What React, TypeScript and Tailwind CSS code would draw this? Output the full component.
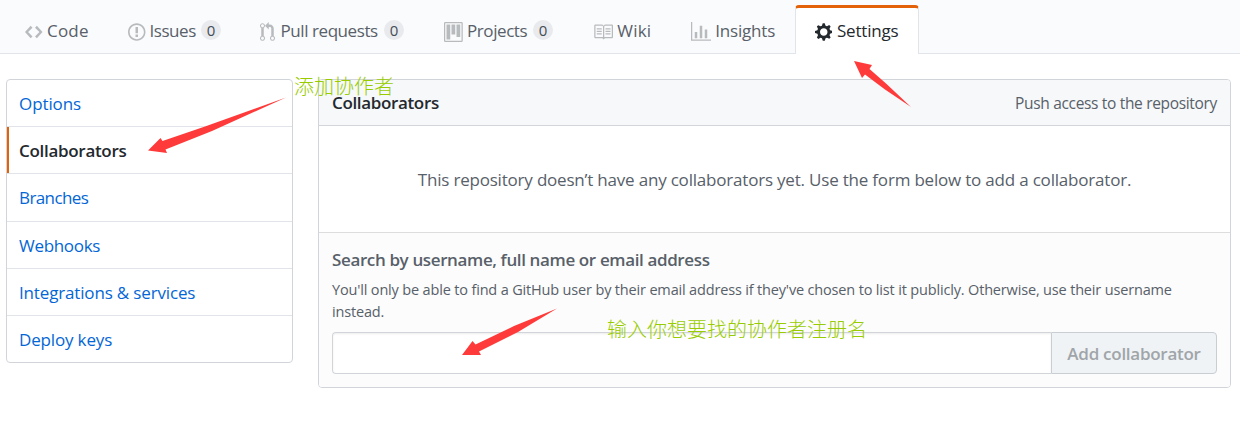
import type { ReactNode } from "react";

type TabProps = {
  label: string;
  path: string;
  viewWidth: number;
  className: string;
  iconClass: string;
  labelClass: string;
  count?: number;
};

function Tab({ label, path, viewWidth, className, iconClass, labelClass, count }: TabProps) {
  return (
    <a className={`flex shrink-0 items-center whitespace-nowrap text-[#586069] ${className}`}>
      <svg
        className={`mt-[3px] h-5 shrink-0 text-[#b8bbbe] ${iconClass}`}
        viewBox={`0 0 ${viewWidth} 16`}
        fill="currentColor"
        fillRule="evenodd"
      >
        <path d={path} />
      </svg>
      <span className={`mt-px shrink-0 ${labelClass}`}>{label}</span>
      {count !== undefined && (
        <span className="flex h-5 w-5 shrink-0 items-center justify-center rounded-full bg-[#e8eaed] pt-px text-[15px] leading-none text-[#444d56]">
          {count}
        </span>
      )}
    </a>
  );
}

const tabs: TabProps[] = [
  {
    label: "Code",
    viewWidth: 14,
    path: "M9.5 3L8 4.5 11.5 8 8 11.5 9.5 13 14 8 9.5 3zm-5 0L0 8l4.5 5L6 11.5 2.5 8 6 4.5 4.5 3z",
    className: "w-[103px]",
    iconClass: "w-[17.5px]",
    labelClass: "ml-[4.5px] tracking-[0.2px]",
  },
  {
    label: "Issues",
    viewWidth: 14,
    path: "M7 2.3c3.14 0 5.7 2.56 5.7 5.7s-2.56 5.7-5.7 5.7A5.71 5.71 0 0 1 1.3 8c0-3.14 2.56-5.7 5.7-5.7zM7 1C3.14 1 0 4.14 0 8s3.14 7 7 7 7-3.14 7-7-3.14-7-7-7zm1 3H6v5h2V4zm0 6H6v2h2v-2z",
    className: "w-[132px]",
    iconClass: "w-[17.5px]",
    labelClass: "w-[51.5px] ml-[4px] tracking-[-0.45px]",
    count: 0,
  },
  {
    label: "Pull requests",
    viewWidth: 12,
    path: "M11 11.28V5c-.03-.78-.34-1.47-.94-2.06C9.46 2.35 8.78 2.03 8 2H7V0L4 3l3 3V4h1c.27.02.48.11.69.31.21.2.3.42.31.69v6.28A1.993 1.993 0 0 0 10 15a1.993 1.993 0 0 0 1-3.72zm-1 2.92c-.66 0-1.2-.55-1.2-1.2 0-.65.55-1.2 1.2-1.2.65 0 1.2.55 1.2 1.2 0 .65-.55 1.2-1.2 1.2zM4 3c0-1.11-.89-2-2-2a1.993 1.993 0 0 0-1 3.72v6.56A1.993 1.993 0 0 0 2 15a1.993 1.993 0 0 0 1-3.72V4.72c.59-.34 1-.98 1-1.72zm-.8 10c0 .66-.55 1.2-1.2 1.2-.65 0-1.2-.55-1.2-1.2 0-.65.55-1.2 1.2-1.2.65 0 1.2.55 1.2 1.2zM2 4.2C1.34 4.2.8 3.65.8 3c0-.65.55-1.2 1.2-1.2.65 0 1.2.55 1.2 1.2 0 .65-.55 1.2-1.2 1.2z",
    className: "w-[184px]",
    iconClass: "w-[15px]",
    labelClass: "w-[103.5px] ml-[5.5px] tracking-[-0.43px]",
    count: 0,
  },
  {
    label: "Projects",
    viewWidth: 15,
    path: "M10 12h3V2h-3v10zm-4-2h3V2H6v8zm-4 4h3V2H2v12zm-1 1h13V1H1v14zM14 0H1a1 1 0 0 0-1 1v14a1 1 0 0 0 1 1h13a1 1 0 0 0 1-1V1a1 1 0 0 0-1-1z",
    className: "w-[149.5px]",
    iconClass: "w-[18.75px]",
    labelClass: "w-[66px] ml-[4.25px] tracking-[-0.42px]",
    count: 0,
  },
  {
    label: "Wiki",
    viewWidth: 16,
    path: "M3 5h4v1H3V5zm0 3h4V7H3v1zm0 2h4V9H3v1zm11-5h-4v1h4V5zm0 2h-4v1h4V7zm0 2h-4v1h4V9zm2-6v9c0 .55-.45 1-1 1H9.5l-1 1-1-1H2c-.55 0-1-.45-1-1V3c0-.55.45-1 1-1h5.5l1 1 1-1H15c.55 0 1 .45 1 1zm-8 .5L7.5 3H2v9h6V3.5zm7-.5H9.5l-.5.5V12h6V3z",
    className: "-ml-[0.75px] w-[98px]",
    iconClass: "w-5",
    labelClass: "ml-[4.5px] tracking-[0.2px]",
  },
  {
    label: "Insights",
    viewWidth: 16,
    path: "M16 14v1H0V0h1v14h15zM5 13H3V8h2v5zm4 0H7V3h2v10zm4 0h-2V6h2v7z",
    className: "w-[105.25px]",
    iconClass: "w-5",
    labelClass: "ml-[4.5px] tracking-[-0.2px]",
  },
];

const gear =
  "M14 8.77v-1.6l-1.94-.64-.45-1.09.88-1.84-1.13-1.13-1.81.91-1.09-.45-.69-1.92h-1.6l-.63 1.94-1.11.45-1.84-.88-1.13 1.13.91 1.81-.45 1.09L0 7.23v1.59l1.94.64.45 1.09-.88 1.84 1.13 1.13 1.81-.91 1.09.45.69 1.92h1.59l.63-1.94 1.11-.45 1.84.88 1.13-1.13-.92-1.81.47-1.09L14 8.75v.02zM7 11c-1.66 0-3-1.34-3-3s1.34-3 3-3 3 1.34 3 3-1.34 3-3 3z";

const menu = [
  { label: "Options", className: "h-[47px] border-b pt-px tracking-[-0.09px] text-[#0366d6]" },
  {
    label: "Collaborators",
    className: "h-[47px] border-b font-semibold tracking-[-0.3px] text-[#24292e]",
    active: true,
  },
  { label: "Branches", className: "h-12 border-b tracking-[-0.6px] text-[#0366d6]" },
  { label: "Webhooks", className: "h-[47px] border-b pt-px tracking-[-0.3px] text-[#0366d6]" },
  { label: "Integrations & services", className: "h-[47px] border-b pt-px tracking-[-0.16px] text-[#0366d6]" },
  { label: "Deploy keys", className: "h-[46px] pt-px tracking-[-0.16px] text-[#0366d6]" },
];

function Note({ className, children }: { className: string; children: ReactNode }) {
  return (
    <span
      className={`absolute whitespace-nowrap font-['Noto_Sans_CJK_SC',sans-serif] text-[20px] font-light leading-5 text-[#99cc00] ${className}`}
    >
      {children}
    </span>
  );
}

export default function App() {
  return (
    <div className="relative h-[421px] w-[1240px] overflow-hidden bg-white font-['Open_Sans',sans-serif] text-[17px] leading-[26px] text-[#24292e]">
      <nav className="flex h-[54px] border-b border-[#e1e4e8] bg-[#fafbfc] pl-[25px] pt-[5px]">
        {tabs.map((tab) => (
          <Tab key={tab.label} {...tab} className={`h-[50px] ${tab.className}`} />
        ))}
        <a className="-ml-px flex h-[49px] w-[124px] shrink-0 items-center rounded-t-[4px] border-x border-t-[3px] border-x-[#e1e4e8] border-t-[#e36209] bg-white pl-[18.5px]">
          <svg className="mt-px h-5 w-[17.5px] shrink-0" viewBox="0 0 14 16" fill="currentColor" fillRule="evenodd">
            <path d={gear} />
          </svg>
          <span className="-mt-px ml-[5px] tracking-[-0.2px]">Settings</span>
        </a>
      </nav>

      <div className="flex items-start pl-[6px] pt-[25px]">
        <aside className="w-[287px] shrink-0 overflow-hidden rounded-[4px] border border-[#d1d5da]">
          {menu.map((item) => (
            <a key={item.label} className={`flex items-stretch border-[#e1e4e8] ${item.className}`}>
              <span className={`w-[2px] ${item.active ? "bg-[#e36209]" : ""}`} />
              <span className={`self-center pl-[10px] ${item.active ? "pt-px" : ""}`}>{item.label}</span>
            </a>
          ))}
        </aside>

        <main className="ml-[25px] w-[913px] shrink-0 overflow-hidden rounded-[4px] border border-[#d1d5da]">
          <header className="flex h-[46px] items-center justify-between border-b border-[#d1d5da] bg-[#f6f8fa] px-[13px]">
            <h3 className="font-semibold tracking-[-0.35px]">Collaborators</h3>
            <span className="pt-px text-[15.5px] tracking-[-0.33px] text-[#586069]">Push access to the repository</span>
          </header>
          <p className="flex h-[107px] items-center justify-center whitespace-nowrap border-b border-[#dddddd] pt-[2px] tracking-[-0.2px] text-[#586069]">
            This repository doesn’t have any collaborators yet. Use the form below to add a collaborator.
          </p>
          <form className="h-[154px] bg-[#fcfcfc] px-[13px] pt-[14px] text-[#586069]">
            <label className="block font-semibold tracking-[-0.37px]">Search by username, full name or email address</label>
            <p className="mt-[6px] whitespace-nowrap text-[14.5px] leading-[22px] tracking-[-0.165px]">
              You'll only be able to find a GitHub user by their email address if they've chosen to list it publicly. Otherwise, use their username
              <br />
              instead.
            </p>
            <div className="mt-[9px] flex h-[42px]">
              <input
                type="text"
                className="h-[42px] w-[719px] rounded-l-[4px] border border-r-0 border-[#d1d5da] bg-white shadow-[inset_0_1px_2px_rgba(27,31,35,0.075)] outline-none"
              />
              <button
                type="button"
                className="h-[42px] w-[166px] whitespace-nowrap rounded-r-[4px] border border-[#c9ced3] bg-[#eff3f6] pt-[2px] font-semibold tracking-[-0.27px] text-[#a0a5a9]"
              >
                Add collaborator
              </button>
            </div>
          </form>
        </main>
      </div>

      <Note className="left-[294px] top-[76px]">添加协作者</Note>
      <Note className="left-[607px] top-[319px]">输入你想要找的协作者注册名</Note>

      <svg className="pointer-events-none absolute left-0 top-0" width="1240" height="421" fill="#fe3a3a">
        <path d="M148 150.5L160.5 138L162.5 141L205 126.5L286 97.5L212 131L165.5 149.5L167 153Z" />
        <path d="M854 61L872 65L869.5 69L886 83.5L911 107L885 89.5L865 74.5L862 78Z" />
        <path d="M462 355L472.5 341L475.5 344.5L514 326L557 308.5L518 332L479 351.5L481 355Z" />
      </svg>
    </div>
  );
}
